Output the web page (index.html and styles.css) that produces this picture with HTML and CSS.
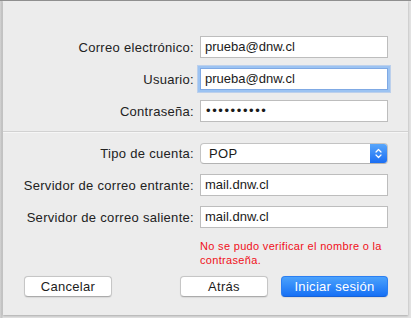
FILE: index.html
```html
<!DOCTYPE html>
<html lang="es">
<head>
<meta charset="utf-8">
<link rel="stylesheet" href="styles.css">
</head>
<body>
<div class="screen">
  <div class="sheet">
    <div class="form-grid section-top">
      <div class="label">Correo electrónico:</div>
      <div class="field">prueba@dnw.cl</div>
      <div class="label">Usuario:</div>
      <div class="field focused">prueba@dnw.cl</div>
      <div class="label">Contraseña:</div>
      <div class="field password">••••••••••</div>
    </div>
    <div class="separator"></div>
    <div class="form-grid section-bottom">
      <div class="label">Tipo de cuenta:</div>
      <div class="popup">
        <span class="popup-value">POP</span>
        <span class="popup-stepper">
          <svg width="7" height="11" viewBox="0 0 7 11"><path d="M1 4 L3.5 1.5 L6 4 M1 7 L3.5 9.5 L6 7" fill="none" stroke="#fff" stroke-width="1.2" stroke-linecap="round" stroke-linejoin="round"/></svg>
        </span>
      </div>
      <div class="label">Servidor de correo entrante:</div>
      <div class="field">mail.dnw.cl</div>
      <div class="label">Servidor de correo saliente:</div>
      <div class="field">mail.dnw.cl</div>
    </div>
    <div class="error">No se pudo verificar el nombre o la contraseña.</div>
    <div class="buttons">
      <button class="btn">Cancelar</button>
      <span class="spacer"></span>
      <button class="btn">Atrás</button>
      <button class="btn primary">Iniciar sesión</button>
    </div>
  </div>
</div>
</body>
</html>
```

FILE: styles.css
```css
html, body {
  margin: 0;
  padding: 0;
}
body {
  font-family: "Liberation Sans", Arial, sans-serif;
  font-size: 13px;
  color: #1c1c1c;
  background: #e9e9e9;
}
.screen {
  width: 411px;
  height: 318px;
  display: flex;
  background: linear-gradient(to right, #d2d2d2 0, #c4c4c4 2px, #e2e2e2 3px);
  border-top: 1px solid #8f8f8f;
  box-sizing: border-box;
  overflow: hidden;
}
.sheet {
  margin-left: 3px;
  width: 405px;
  height: 314px;
  background: #ececec;
  box-shadow: 0 1px 2px rgba(0,0,0,0.25);
  box-sizing: border-box;
  padding-top: 35px;
}
.form-grid {
  display: grid;
  grid-template-columns: 191px 188px;
  column-gap: 6px;
  align-items: center;
}
.section-top {
  row-gap: 10px;
  grid-template-rows: 22px 22px 22px;
}
.section-bottom {
  margin-top: 10px;
  row-gap: 10px;
  grid-template-rows: 21px 22px 22px;
}
.label {
  justify-self: end;
  white-space: nowrap;
  color: #222;
  letter-spacing: 0.3px;
}
.field {
  height: 22px;
  box-sizing: border-box;
  background: #fff;
  border: 1px solid #bdbdbd;
  padding: 0 4px;
  line-height: 20px;
  font-size: 13px;
  color: #1a1a1a;
  white-space: nowrap;
}
.field.focused {
  border-color: #7fa9e4;
  box-shadow: 0 0 0 2px #9cc3f2, 0 0 0 3px rgba(140,180,235,0.5);
}
.field.password {
  letter-spacing: 1.6px;
  font-size: 13px;
  padding-left: 5px;
}
.separator {
  margin: 9px 0 0;
  height: 1px;
  background: #d2d2d2;
  border-bottom: 1px solid #f6f6f6;
}
.popup {
  height: 21px;
  box-sizing: border-box;
  display: flex;
  background: #fff;
  border: 1px solid #c3c3c3;
  border-bottom-color: #b3b3b3;
  border-radius: 4px;
  overflow: hidden;
}
.popup-value {
  flex: 1;
  padding-left: 8px;
  line-height: 19px;
  color: #1a1a1a;
  letter-spacing: 0.3px;
}
.popup-stepper {
  width: 17px;
  display: flex;
  align-items: center;
  justify-content: center;
  background: linear-gradient(#58a6fb, #1b6ef3);
}
.error {
  margin: 11px 0 0 197px;
  width: 192px;
  font-size: 11px;
  line-height: 14px;
  letter-spacing: 0.32px;
  color: #f0101a;
}
.buttons {
  display: flex;
  align-items: center;
  margin-top: 9px;
  padding: 0 20px 0 21px;
}
.spacer {
  flex: 1;
}
.btn {
  font-family: "Liberation Sans", Arial, sans-serif;
  font-size: 13px;
  letter-spacing: 0.3px;
  height: 21px;
  width: 88px;
  padding: 0;
  background: #fff;
  color: #1c1c1c;
  border: 1px solid #c6c6c6;
  border-bottom-color: #ababab;
  border-radius: 4px;
  box-shadow: 0 0.5px 1px rgba(0,0,0,0.08);
  line-height: 19px;
}
.btn.primary {
  width: 107px;
  margin-left: 13px;
  color: #fff;
  border: 1px solid #2b7ff2;
  border-bottom-color: #1561d8;
  background: linear-gradient(#4ba2fc, #1670f5);
}
```
